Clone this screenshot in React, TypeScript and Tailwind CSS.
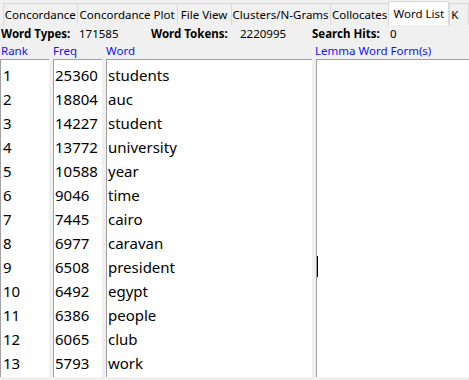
import React from "react";

const tabs = [
  { label: "Concordance", w: 76 },
  { label: "Concordance Plot", w: 103 },
  { label: "File View", w: 56 },
  { label: "Clusters/N-Grams", w: 102 },
  { label: "Collocates", w: 61 },
];

const rows: [number, number, string][] = [
  [1, 25360, "students"],
  [2, 18804, "auc"],
  [3, 14227, "student"],
  [4, 13772, "university"],
  [5, 10588, "year"],
  [6, 9046, "time"],
  [7, 7445, "cairo"],
  [8, 6977, "caravan"],
  [9, 6508, "president"],
  [10, 6492, "egypt"],
  [11, 6386, "people"],
  [12, 6065, "club"],
  [13, 5793, "work"],
];

const ui = "font-['Segoe_UI','Noto_Sans',sans-serif]";

export default function App() {
  return (
    <div className={`relative w-[469px] h-[380px] overflow-hidden bg-[#f0f0f0] text-black ${ui}`}>
      {/* tab strip */}
      <div className="flex items-end h-[25px] pl-[3px]">
        {tabs.map((t) => (
          <div
            key={t.label}
            style={{ width: t.w }}
            className="h-[22px] flex items-center justify-center border border-b-0 border-[#d9d9d9] -mr-px bg-[#f0f0f0] text-[11.5px] leading-none whitespace-nowrap"
          >
            {t.label}
          </div>
        ))}
        <div className="h-[24px] w-[62px] flex items-center justify-center border border-b-0 border-[#d9d9d9] bg-white text-[11.5px] leading-none whitespace-nowrap relative z-10">
          Word List
        </div>
        <div className="h-[22px] w-[20px] border border-b-0 border-[#d9d9d9] bg-[#f0f0f0] text-[11.5px] leading-none pl-[1px] flex items-center overflow-hidden">
          K
        </div>
      </div>

      {/* stats */}
      <div className="flex items-center h-[18px] text-[11.5px] leading-none whitespace-nowrap">
        <span className="w-[79px] pl-[1px] font-bold">Word Types:</span>
        <span className="w-[72px]">171585</span>
        <span className="w-[89px] font-bold">Word Tokens:</span>
        <span className="w-[72px]">2220995</span>
        <span className="w-[78px] font-bold">Search Hits:</span>
        <span>0</span>
      </div>

      {/* headers */}
      <div className="flex items-center h-[16px] text-[11.5px] leading-none text-[#1010ff] whitespace-nowrap">
        <span className="w-[53px] pl-[1px]">Rank</span>
        <span className="w-[53px]">Freq</span>
        <span className="w-[209px]">Word</span>
        <span>Lemma Word Form(s)</span>
      </div>

      {/* lists */}
      <div className="flex gap-[4px] h-[318px] text-[15px] leading-none">
        <div className="w-[49px] bg-white border-t border-l border-[#a0a0a0] pt-[3px] pl-[2px]">
          {rows.map((r) => (
            <div key={r[0]} className="h-[24px] flex items-center">{r[0]}</div>
          ))}
        </div>
        <div className="w-[49px] bg-white border-t border-l border-[#a0a0a0] pt-[3px] pl-[1px]">
          {rows.map((r) => (
            <div key={r[0]} className="h-[24px] flex items-center">{r[1]}</div>
          ))}
        </div>
        <div className="w-[206px] bg-white border-t border-l border-[#a0a0a0] pt-[3px] pl-[1px]">
          {rows.map((r) => (
            <div key={r[0]} className="h-[24px] flex items-center">{r[2]}</div>
          ))}
        </div>
        <div className="flex-1 bg-white border-t border-l border-[#a0a0a0]" />
      </div>

      {/* text cursor */}
      <div className="absolute left-[317px] top-[256px] w-px h-[21px] bg-black" />
    </div>
  );
}
